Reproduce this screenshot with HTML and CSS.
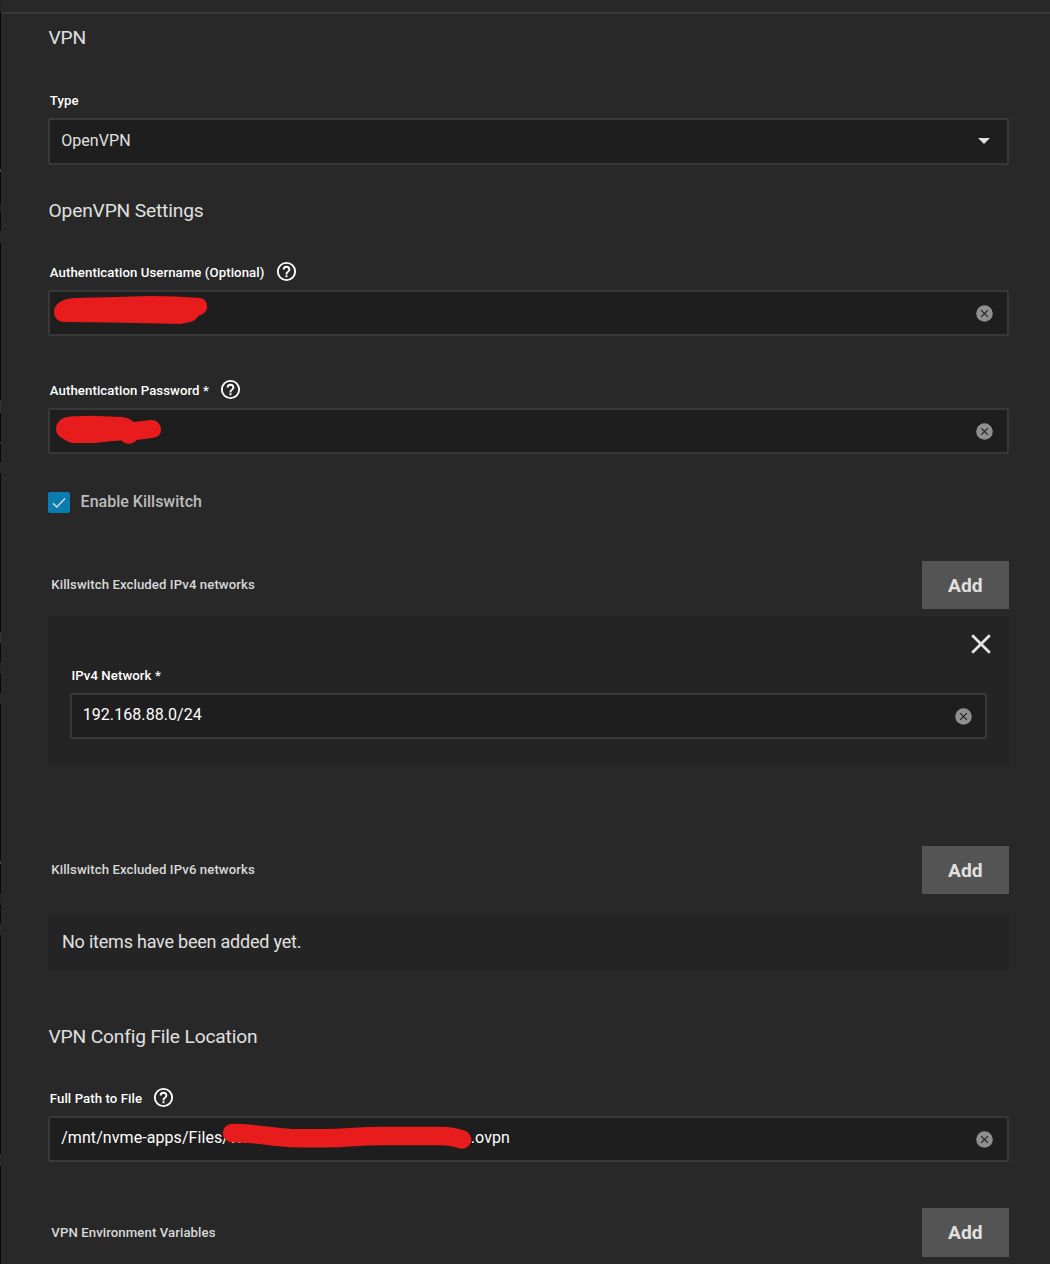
FILE: index.html
```html
<!DOCTYPE html>
<html lang="en">
<head>
<meta charset="utf-8">
<title>VPN</title>
<link rel="stylesheet" href="styles.css">
</head>
<body>
<svg class="defs" aria-hidden="true">
  <symbol id="help" viewBox="0 0 24 24"><path d="M11,18H13V16H11V18M12,2A10,10 0 0,0 2,12A10,10 0 0,0 12,22A10,10 0 0,0 22,12A10,10 0 0,0 12,2M12,20C7.59,20 4,16.41 4,12C4,7.59 7.59,4 12,4C16.41,4 20,7.59 20,12C20,16.41 16.41,20 12,20M12,6A4,4 0 0,0 8,10H10A2,2 0 0,1 12,8A2,2 0 0,1 14,10C14,12 11,11.75 11,15H13C13,12.75 16,12.5 16,10A4,4 0 0,0 12,6Z"/></symbol>
  <symbol id="clear" viewBox="0 0 17 17"><circle cx="8.5" cy="8.5" r="8.3" fill="#8f8f8f"/><path d="M5.1 5.1L11.9 11.9M11.9 5.1L5.1 11.9" stroke="#222" stroke-width="1.2" fill="none"/></symbol>
</svg>
<main class="panel">
  <h2 class="heading">VPN</h2>
  <section class="field field-type">
    <label class="label">Type</label>
    <div class="input select"><span>OpenVPN</span><svg class="arrow" viewBox="0 0 12 6"><path d="M0 0H12L6 6Z"/></svg></div>
  </section>

  <h2 class="heading heading-openvpn">OpenVPN Settings</h2>
  <section class="field field-user">
    <label class="label">Authentication Username (Optional)<svg class="help"><use href="#help"/></svg></label>
    <div class="input"><span></span><svg class="clear"><use href="#clear"/></svg>
      <svg class="mark" viewBox="48 290 440 46"><path d="M54 312C54 304 62 298.5 75 298L125 296.8L150 296L175 296.4L200 298C206 299 207.5 304 207 308C206 313 202 315 198 316C196 320 193 321.5 190 322L180 324L110 322.5L63 322C57 321 54 317 54 312Z"/></svg>
    </div>
  </section>
  <section class="field field-password">
    <label class="label">Authentication Password *<svg class="help"><use href="#help"/></svg></label>
    <div class="input"><span></span><svg class="clear"><use href="#clear"/></svg>
      <svg class="mark" viewBox="48 408 440 46"><path d="M56 429C56 422 62 417 70 416.5L90 415.8L122 417Q130 418 133.5 422L151 420C158 420 161 425 161 430C161 435 157 437.5 152 438L136.5 440C133 445 125 445 122 440.5L113 441L95 443L72 443Q67 442 62 438C57 435 56 432 56 429Z"/></svg>
    </div>
  </section>
  <div class="check">
    <span class="box"><svg viewBox="0 0 22 21"><path d="M5 11.2L8.8 15L17 6.5"/></svg></span>
    <span class="check-text">Enable Killswitch</span>
  </div>

  <div class="list-head list-v4"><span class="list-title">Killswitch Excluded IPv4 networks</span><button class="add">Add</button></div>
  <div class="item">
    <svg class="remove" viewBox="0 0 20 20"><path d="M1.2 1.2L18.8 18.8M18.8 1.2L1.2 18.8"/></svg>
    <section class="field">
      <label class="label">IPv4 Network *</label>
      <div class="input"><span>192.168.88.0/24</span><svg class="clear"><use href="#clear"/></svg></div>
    </section>
  </div>

  <div class="list-head list-v6"><span class="list-title">Killswitch Excluded IPv6 networks</span><button class="add">Add</button></div>
  <div class="empty">No items have been added yet.</div>

  <h2 class="heading heading-config">VPN Config File Location</h2>
  <section class="field field-path">
    <label class="label">Full Path to File<svg class="help"><use href="#help"/></svg></label>
    <div class="input"><span class="path"><span class="path-start">/mnt/nvme-apps/Files/Wi</span><span>.ovpn</span></span><svg class="clear"><use href="#clear"/></svg>
      <svg class="mark" viewBox="48 1116 440 46"><path class="stroke" d="M232 1133C255 1133 270 1137 290 1138C310 1138.3 325 1138.3 335 1138C350 1137.5 360 1136 385 1136H440Q452 1136 462 1139.5"/></svg>
    </div>
  </section>

  <div class="list-head list-env"><span>VPN Environment Variables</span><button class="add add-env">Add</button></div>
</main>
</body>
</html>
```
FILE: styles.css
```css
* { box-sizing: border-box; }
body {
  margin: 0;
  height: 1264px;
  overflow: hidden;
  display: flex;
  background: #282828;
  color: #e0e0e0;
  font-family: Roboto, sans-serif;
}
body::before {
  content: "";
  width: 1px;
  background: linear-gradient(#222 0 12px, #090909 12px 169px, #444 169px 172px, #090909 172px 204px, #222 204px 212px, #090909 212px 231px, #292929 231px 243px, #090909 243px 400px, #333 400px 413px, #090909 413px 442px, #333 442px 444px, #090909 444px 462px, #292929 462px 473px, #090909 473px 632px, #333 632px 643px, #090909 643px 662px, #252525 662px 674px, #090909 674px 693px, #292929 693px 704px, #090909 704px 861px, #444 861px 864px, #090909 864px 893px, #222 893px 905px, #090909 905px 923px, #292929 923px 935px, #090909 935px 1154px, #292929 1154px 1166px, #090909 1166px);
}
.defs { position: absolute; width: 0; height: 0; }
.panel {
  flex: 1;
  display: flex;
  flex-direction: column;
  margin-top: 12px;
  padding: 0 41px 0 47px;
  border-top: 2px solid #383838;
}
.heading {
  margin: 0;
  height: 46px;
  padding-left: 0.5px;
  line-height: 48px;
  font-size: 19.2px;
  font-weight: 400;
  letter-spacing: -0.16px;
}
.field { display: flex; flex-direction: column; }
.label {
  display: flex;
  align-items: center;
  height: 30px;
  padding: 0 0 6px 1.8px;
  color: #fff;
  font-size: 13.2px;
  font-weight: 500;
  letter-spacing: 0.08px;
  white-space: pre;
}
.help { width: 23px; height: 23px; margin: -0.5px 0 0 10.3px; fill: #fff; }
.input {
  position: relative;
  display: flex;
  align-items: center;
  justify-content: space-between;
  height: 46px;
  padding: 0 14px 3px 11.2px;
  background: #1e1e1e;
  border: 2px solid #383838;
  border-radius: 2px;
  color: #fff;
  font-size: 16px;
  letter-spacing: 0.07px;
}
.select { height: 47px; padding-right: 17px; color: #e0e0e0; }
.arrow { width: 12px; height: 6px; fill: #e0e0e0; margin-top: 1px; }
.clear { width: 17px; height: 17px; margin-top: 4px; }
.mark {
  position: absolute;
  left: -2px;
  top: -2px;
  width: 440px;
  height: 46px;
  fill: #e81c1c;
}
.mark .stroke {
  fill: none;
  stroke: #e81c1c;
  stroke-width: 18.4;
  stroke-linecap: round;
}
.path { display: flex; }
.path-start { width: 409.6px; }
.field-type { margin-top: 28px; }
.heading-openvpn { margin-top: 22px; }
.field-user { margin-top: 27px; }
.field-password { margin-top: 42px; }
.check {
  display: flex;
  align-items: center;
  gap: 10.6px;
  height: 21px;
  margin-top: 38px;
  color: #bdbdbd;
  font-size: 16px;
  font-weight: 500;
}
.check-text { padding-bottom: 2px; }
.box { width: 22px; height: 21px; background: #0a7cb0; border-radius: 2px; }
.box svg { display: block; fill: none; stroke: #ddd; stroke-width: 1.4; }
.list-head {
  display: flex;
  align-items: center;
  justify-content: space-between;
  padding-left: 3.3px;
  color: #d8d8d8;
  font-size: 13.2px;
  font-weight: 500;
  letter-spacing: 0.08px;
}
.list-title { padding-bottom: 2px; }
.add {
  width: 87px;
  height: 48px;
  padding: 0 0.5px 0 0;
  border: 0;
  background: #545454;
  color: #e0e0e0;
  font: 700 19.2px Roboto, sans-serif;
}
.add-env { height: 49px; padding-bottom: 1px; }
.list-v4 { margin-top: 48px; }
.item {
  display: flex;
  flex-direction: column;
  height: 150px;
  margin-top: 7px;
  padding: 18px 22px 27px;
  background: #242424;
}
.remove {
  align-self: flex-end;
  width: 20px;
  height: 20px;
  margin-right: -4.4px;
  fill: none;
  stroke: #e6e6e6;
  stroke-width: 2.7;
}
.item .field { margin-top: 9px; }
.item .label { padding-left: 1.4px; }
.item .input { padding: 0 13px 3px 10.7px; }
.list-v6 { margin-top: 80px; }
.empty {
  height: 56px;
  margin-top: 20px;
  padding-left: 14px;
  background: #242424;
  font-size: 18px;
  letter-spacing: -0.22px;
  line-height: 55px;
}
.heading-config { margin-top: 43px; }
.field-path { margin-top: 27px; }
.list-env { margin-top: 46px; }
```
